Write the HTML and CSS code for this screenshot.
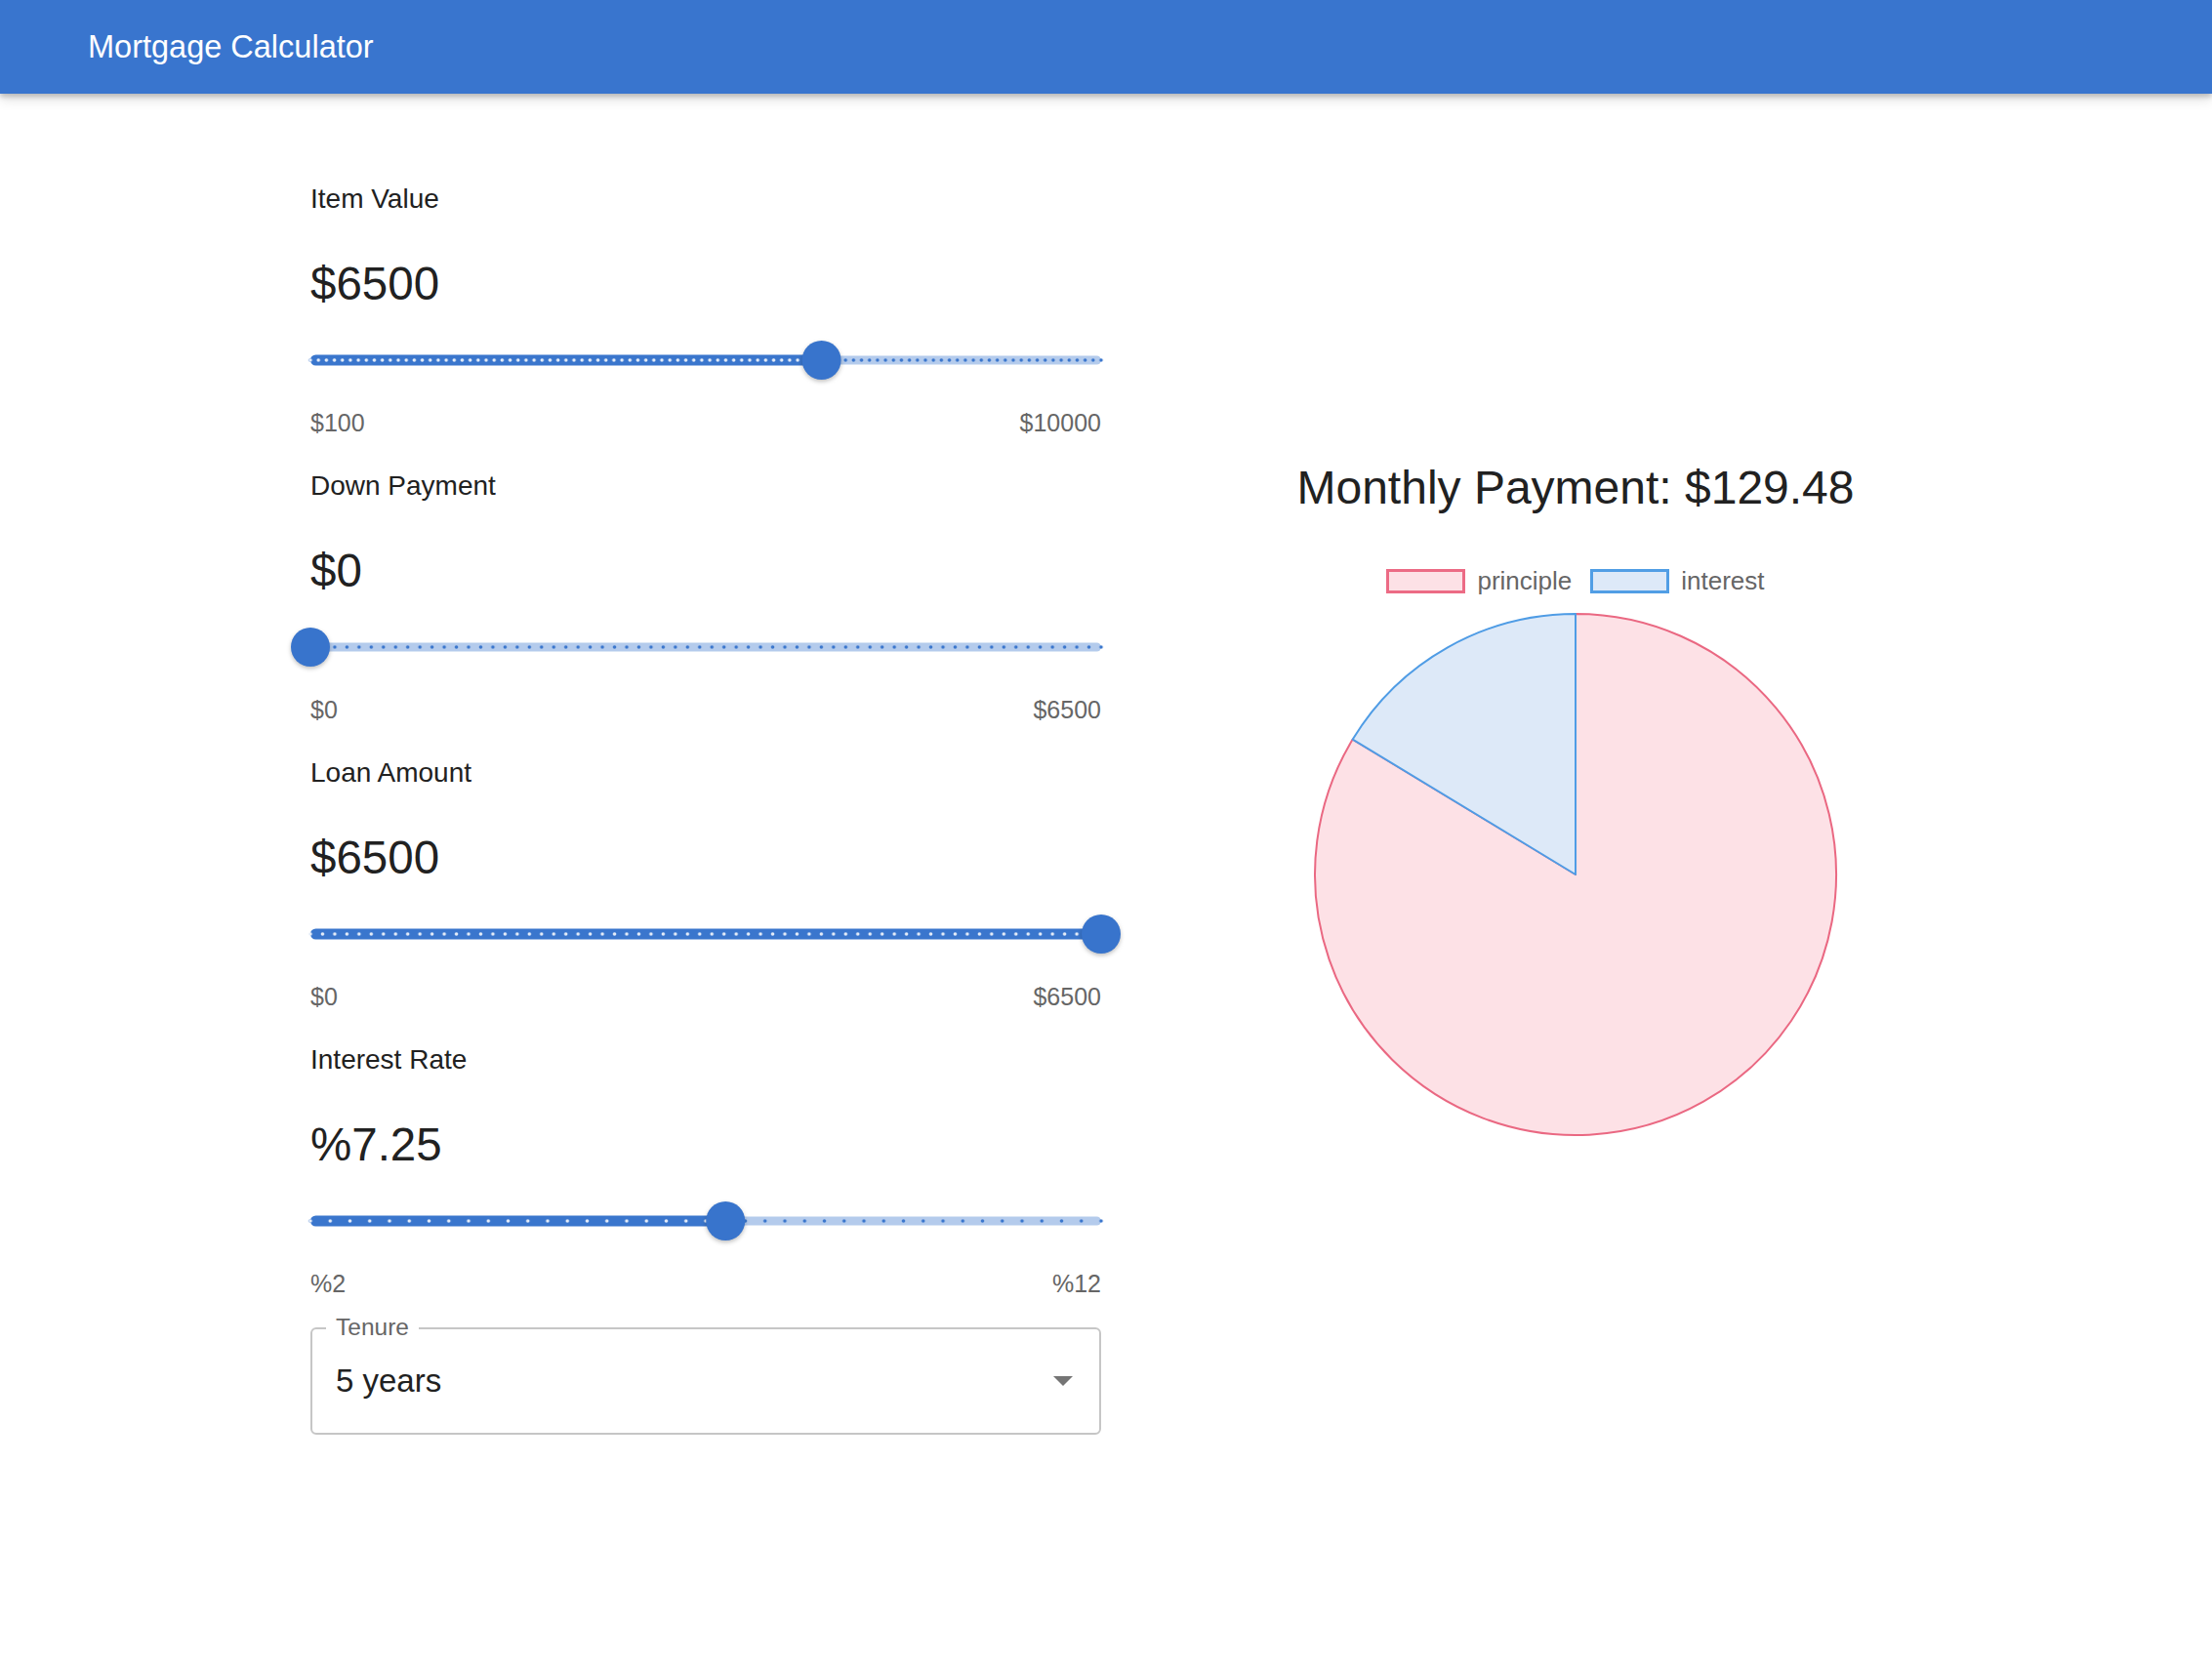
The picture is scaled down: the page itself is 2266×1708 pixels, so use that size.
FILE: index.html
```html
<!DOCTYPE html>
<html lang="en">
<head>
<meta charset="utf-8">
<title>Mortgage Calculator</title>
<link rel="stylesheet" href="styles.css">
</head>
<body>
<header class="appbar">
  <div class="appbar-title">Mortgage Calculator</div>
</header>
<main class="layout">
  <section class="form">
    <div class="field">
      <div class="field-label">Item Value</div>
      <div class="field-value">$6500</div>
      <svg class="slider" viewBox="0 0 810 40" width="810" height="40">
        <defs>
          <pattern id="iv-b" x="-4.0909" y="0" width="8.1818" height="40" patternUnits="userSpaceOnUse"><circle cx="4.0909" cy="20" r="1.8" fill="#3a76cd"/></pattern>
          <pattern id="iv-w" x="-4.0909" y="0" width="8.1818" height="40" patternUnits="userSpaceOnUse"><circle cx="4.0909" cy="20" r="1.8" fill="#e4ecf8"/></pattern>
        </defs>
        <rect class="rail" x="0" y="15.5" width="810" height="9" rx="4.5"/>
        <rect x="-3" y="16" width="816" height="8" fill="url(#iv-b)"/>
        <rect class="track" x="0" y="14.5" width="523.6" height="11" rx="5.5"/>
        <rect x="-3" y="16" width="526.6" height="8" fill="url(#iv-w)"/>
        <circle class="thumb" cx="523.6" cy="20" r="20"/>
      </svg>
      <div class="field-range"><span>$100</span><span>$10000</span></div>
    </div>

    <div class="field">
      <div class="field-label">Down Payment</div>
      <div class="field-value">$0</div>
      <svg class="slider" viewBox="0 0 810 40" width="810" height="40">
        <defs>
          <pattern id="dp-b" x="-6.2308" y="0" width="12.4615" height="40" patternUnits="userSpaceOnUse"><circle cx="6.2308" cy="20" r="1.8" fill="#3a76cd"/></pattern>
        </defs>
        <rect class="rail" x="0" y="15.5" width="810" height="9" rx="4.5"/>
        <rect x="-3" y="16" width="816" height="8" fill="url(#dp-b)"/>
        <circle class="thumb" cx="0" cy="20" r="20"/>
      </svg>
      <div class="field-range"><span>$0</span><span>$6500</span></div>
    </div>

    <div class="field">
      <div class="field-label">Loan Amount</div>
      <div class="field-value">$6500</div>
      <svg class="slider" viewBox="0 0 810 40" width="810" height="40">
        <defs>
          <pattern id="la-w" x="-6.2308" y="0" width="12.4615" height="40" patternUnits="userSpaceOnUse"><circle cx="6.2308" cy="20" r="1.8" fill="#e4ecf8"/></pattern>
        </defs>
        <rect class="rail" x="0" y="15.5" width="810" height="9" rx="4.5"/>
        <rect class="track" x="0" y="14.5" width="810" height="11" rx="5.5"/>
        <rect x="-3" y="16" width="816" height="8" fill="url(#la-w)"/>
        <circle class="thumb" cx="810" cy="20" r="20"/>
      </svg>
      <div class="field-range"><span>$0</span><span>$6500</span></div>
    </div>

    <div class="field">
      <div class="field-label">Interest Rate</div>
      <div class="field-value">%7.25</div>
      <svg class="slider" viewBox="0 0 810 40" width="810" height="40">
        <defs>
          <pattern id="ir-b" x="-10.125" y="0" width="20.25" height="40" patternUnits="userSpaceOnUse"><circle cx="10.125" cy="20" r="1.8" fill="#3a76cd"/></pattern>
          <pattern id="ir-w" x="-10.125" y="0" width="20.25" height="40" patternUnits="userSpaceOnUse"><circle cx="10.125" cy="20" r="1.8" fill="#e4ecf8"/></pattern>
        </defs>
        <rect class="rail" x="0" y="15.5" width="810" height="9" rx="4.5"/>
        <rect x="-3" y="16" width="816" height="8" fill="url(#ir-b)"/>
        <rect class="track" x="0" y="14.5" width="425.25" height="11" rx="5.5"/>
        <rect x="-3" y="16" width="428.25" height="8" fill="url(#ir-w)"/>
        <circle class="thumb" cx="425.25" cy="20" r="20"/>
      </svg>
      <div class="field-range"><span>%2</span><span>%12</span></div>
    </div>

    <div class="select">
      <span class="select-legend">Tenure</span>
      <span class="select-value">5 years</span>
      <span class="select-caret"></span>
    </div>
  </section>

  <section class="summary">
    <h2 class="payment">Monthly Payment: $129.48</h2>
    <div class="legend">
      <div class="legend-item"><span class="swatch swatch-principle"></span><span>principle</span></div>
      <div class="legend-item"><span class="swatch swatch-interest"></span><span>interest</span></div>
    </div>
    <svg class="pie" viewBox="0 0 540 540" width="540" height="540">
      <path class="slice-principle" d="M270,270 L270,3 A267,267 0 1,1 41.7,131.6 Z"/>
      <path class="slice-interest" d="M270,270 L41.7,131.6 A267,267 0 0,1 270,3 Z"/>
    </svg>
  </section>
</main>
</body>
</html>
```

FILE: styles.css
```css
html, body {
  margin: 0;
  padding: 0;
  background: #ffffff;
}

body {
  font-family: "Liberation Sans", Arial, Helvetica, sans-serif;
  color: #212121;
}

.appbar {
  position: relative;
  z-index: 1;
  height: 96px;
  display: flex;
  align-items: center;
  padding-left: 90px;
  background: #3975ce;
  box-shadow: 0 3px 5px rgba(0, 0, 0, 0.2), 0 6px 12px rgba(0, 0, 0, 0.12);
}

.appbar-title {
  color: #ffffff;
  font-size: 32.5px;
}

.layout {
  display: grid;
  grid-template-columns: 810px 972px;
  padding: 88px 0 0 318px;
}

.form {
  display: flex;
  flex-direction: column;
  gap: 29px;
}

.field {
  display: flex;
  flex-direction: column;
}

.field-label {
  font-size: 28px;
  line-height: 40px;
  margin-bottom: 39px;
}

.field-value {
  font-size: 47.5px;
  line-height: 56px;
  margin-bottom: 30px;
}

.slider {
  display: block;
  overflow: visible;
  margin-bottom: 28px;
}

.slider .rail {
  fill: #b4cbec;
}

.slider .track {
  fill: #3a76cd;
}

.slider .thumb {
  fill: #3874cc;
  filter: drop-shadow(0 2px 2px rgba(0, 0, 0, 0.25));
}

.field-range {
  display: flex;
  justify-content: space-between;
  font-size: 25px;
  line-height: 32px;
  color: #666666;
}

.select {
  position: relative;
  height: 110px;
  box-sizing: border-box;
  border: 2px solid #c6c6c6;
  border-radius: 6px;
  display: flex;
  align-items: center;
  justify-content: space-between;
  padding: 0 27px 0 24px;
}

.select-legend {
  position: absolute;
  top: -16px;
  left: 14px;
  padding: 0 10px;
  background: #ffffff;
  font-size: 24.5px;
  line-height: 28px;
  color: #666666;
}

.select-value {
  font-size: 33px;
  color: #212121;
}

.select-caret {
  width: 0;
  height: 0;
  border-left: 10px solid transparent;
  border-right: 10px solid transparent;
  border-top: 10px solid #757575;
}

.summary {
  display: flex;
  flex-direction: column;
  align-items: center;
  padding-top: 288px;
}

.payment {
  margin: 0;
  font-size: 48px;
  line-height: 56px;
  font-weight: normal;
  color: #212121;
}

.legend {
  display: flex;
  align-items: center;
  gap: 19px;
  margin-top: 54px;
  font-size: 26px;
  line-height: 26px;
  color: #666666;
}

.legend-item {
  display: flex;
  align-items: center;
  gap: 12px;
}

.swatch {
  display: block;
  width: 81px;
  height: 25px;
  box-sizing: border-box;
  border: 3px solid;
}

.swatch-principle {
  background: #fde1e6;
  border-color: #ec6b85;
}

.swatch-interest {
  background: #dde9f8;
  border-color: #519ee5;
}

.pie {
  display: block;
  margin-top: 18px;
}

.slice-principle {
  fill: #fde1e6;
  stroke: #ea6882;
  stroke-width: 2;
  stroke-linejoin: round;
}

.slice-interest {
  fill: #dde9f8;
  stroke: #4f9ce5;
  stroke-width: 2;
  stroke-linejoin: round;
}
```
